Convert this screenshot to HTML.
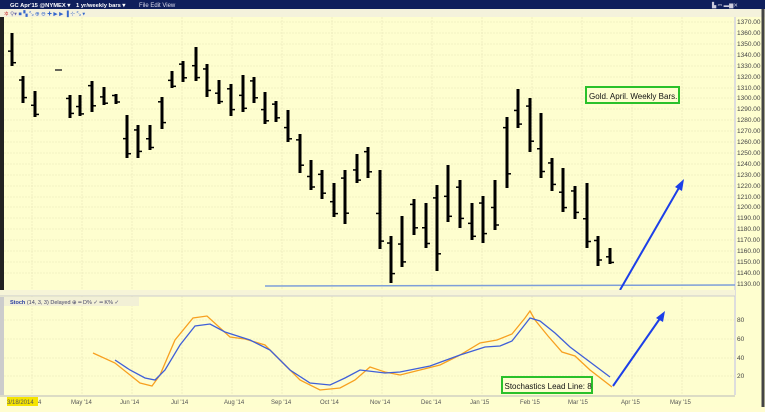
<!DOCTYPE html><html><head><style>
body{margin:0;width:765px;height:407px;overflow:hidden;background:#fffdd0;font-family:"Liberation Sans",sans-serif}
</style></head><body>
<svg id="s" width="765" height="407" xmlns="http://www.w3.org/2000/svg" font-family="Liberation Sans, sans-serif">
<rect x="0" y="0" width="765" height="407" fill="#fefecf"/>
<rect x="0" y="0" width="765" height="9" fill="#0f1f5c"/>
<text x="10" y="7" font-size="5.8" fill="#fff" font-weight="bold">GC Apr'15 @NYMEX ▾</text>
<text x="76" y="7" font-size="5.8" fill="#fff" font-weight="bold">1 yr/weekly bars ▾</text>
<text x="139" y="7" font-size="6" fill="#dde">File   Edit   View</text>
<text x="712" y="7" font-size="5.5" fill="#ccd">▙ ⎓ ▬▆✕</text>
<rect x="0" y="9" width="765" height="8" fill="#f4f2dc"/>
<text x="4" y="15.5" font-size="5.5" fill="#c33">✲ <tspan fill="#66a">⚲▾ </tspan><tspan fill="#36c">■ ▚ ⤡ ⊕ ⊖ ✚ ▶ ▶ ▐ ⊹ ⤡ ▾</tspan></text>
<rect x="0" y="17" width="4" height="273" fill="#222"/>
<rect x="0" y="297" width="4" height="98" fill="#ccc"/>
<line x1="735" y1="17" x2="735" y2="395" stroke="#ddd" stroke-width="2"/>
<line x1="763" y1="9" x2="763" y2="407" stroke="#444" stroke-width="3"/>
<g stroke="#e6e4b8" stroke-width="0.6" stroke-dasharray="2,1">
<line x1="4" y1="22" x2="735" y2="22"/><line x1="4" y1="33" x2="735" y2="33"/><line x1="4" y1="44" x2="735" y2="44"/><line x1="4" y1="55" x2="735" y2="55"/><line x1="4" y1="66" x2="735" y2="66"/><line x1="4" y1="77" x2="735" y2="77"/><line x1="4" y1="88" x2="735" y2="88"/><line x1="4" y1="98" x2="735" y2="98"/><line x1="4" y1="109" x2="735" y2="109"/><line x1="4" y1="120" x2="735" y2="120"/><line x1="4" y1="131" x2="735" y2="131"/><line x1="4" y1="142" x2="735" y2="142"/><line x1="4" y1="153" x2="735" y2="153"/><line x1="4" y1="164" x2="735" y2="164"/><line x1="4" y1="175" x2="735" y2="175"/><line x1="4" y1="186" x2="735" y2="186"/><line x1="4" y1="197" x2="735" y2="197"/><line x1="4" y1="207" x2="735" y2="207"/><line x1="4" y1="218" x2="735" y2="218"/><line x1="4" y1="229" x2="735" y2="229"/><line x1="4" y1="240" x2="735" y2="240"/><line x1="4" y1="251" x2="735" y2="251"/><line x1="4" y1="262" x2="735" y2="262"/><line x1="4" y1="273" x2="735" y2="273"/>
<line x1="4" y1="320" x2="735" y2="320"/><line x1="4" y1="339" x2="735" y2="339"/><line x1="4" y1="358" x2="735" y2="358"/><line x1="4" y1="376" x2="735" y2="376"/>
<line x1="32" y1="17" x2="32" y2="395"/><line x1="82" y1="17" x2="82" y2="395"/><line x1="132" y1="17" x2="132" y2="395"/><line x1="182" y1="17" x2="182" y2="395"/><line x1="232" y1="17" x2="232" y2="395"/><line x1="282" y1="17" x2="282" y2="395"/><line x1="332" y1="17" x2="332" y2="395"/><line x1="382" y1="17" x2="382" y2="395"/><line x1="432" y1="17" x2="432" y2="395"/><line x1="482" y1="17" x2="482" y2="395"/><line x1="532" y1="17" x2="532" y2="395"/><line x1="582" y1="17" x2="582" y2="395"/><line x1="632" y1="17" x2="632" y2="395"/><line x1="682" y1="17" x2="682" y2="395"/>
</g>
<g font-size="6.5" fill="#444">
<text x="737" y="24">1370.00</text><text x="737" y="35">1360.00</text><text x="737" y="46">1350.00</text><text x="737" y="57">1340.00</text><text x="737" y="68">1330.00</text><text x="737" y="79">1320.00</text><text x="737" y="90">1310.00</text><text x="737" y="100">1300.00</text><text x="737" y="111">1290.00</text><text x="737" y="122">1280.00</text><text x="737" y="133">1270.00</text><text x="737" y="144">1260.00</text><text x="737" y="155">1250.00</text><text x="737" y="166">1240.00</text><text x="737" y="177">1230.00</text><text x="737" y="188">1220.00</text><text x="737" y="199">1210.00</text><text x="737" y="209">1200.00</text><text x="737" y="220">1190.00</text><text x="737" y="231">1180.00</text><text x="737" y="242">1170.00</text><text x="737" y="253">1160.00</text><text x="737" y="264">1150.00</text><text x="737" y="275">1140.00</text><text x="737" y="286">1130.00</text>
<text x="737" y="322">80</text><text x="737" y="341">60</text><text x="737" y="360">40</text><text x="737" y="378">20</text>
</g>
<g id="bars" stroke="#000" stroke-width="3">
<line x1="12" y1="33" x2="12" y2="66"/><line x1="23" y1="76" x2="23" y2="103"/><line x1="35" y1="91" x2="35" y2="117"/>
<line x1="70" y1="95" x2="70" y2="118"/><line x1="80" y1="95" x2="80" y2="116"/><line x1="92" y1="81" x2="92" y2="112"/><line x1="104" y1="87" x2="104" y2="105"/><line x1="116" y1="94" x2="116" y2="104"/>
<line x1="127" y1="115" x2="127" y2="158"/><line x1="138" y1="125" x2="138" y2="158"/><line x1="150" y1="125" x2="150" y2="150"/><line x1="162" y1="97" x2="162" y2="129"/><line x1="172" y1="71" x2="172" y2="88"/><line x1="183" y1="61" x2="183" y2="82"/><line x1="196" y1="47" x2="196" y2="81"/><line x1="207" y1="64" x2="207" y2="97"/><line x1="219" y1="80" x2="219" y2="104"/><line x1="231" y1="84" x2="231" y2="116"/><line x1="243" y1="75" x2="243" y2="112"/><line x1="254" y1="77" x2="254" y2="103"/><line x1="265" y1="92" x2="265" y2="124"/><line x1="276" y1="101" x2="276" y2="122"/><line x1="288" y1="110" x2="288" y2="142"/>
<line x1="300" y1="134" x2="300" y2="173"/><line x1="311" y1="160" x2="311" y2="190"/><line x1="322" y1="170" x2="322" y2="199"/><line x1="334" y1="183" x2="334" y2="217"/><line x1="345" y1="170" x2="345" y2="224"/><line x1="357" y1="154" x2="357" y2="183"/><line x1="368" y1="147" x2="368" y2="178"/><line x1="380" y1="170" x2="380" y2="249"/><line x1="391" y1="236" x2="391" y2="283"/><line x1="402" y1="216" x2="402" y2="267"/><line x1="414" y1="199" x2="414" y2="235"/><line x1="426" y1="203" x2="426" y2="248"/><line x1="437" y1="185" x2="437" y2="271"/><line x1="448" y1="165" x2="448" y2="222"/><line x1="460" y1="180" x2="460" y2="228"/><line x1="472" y1="203" x2="472" y2="240"/><line x1="483" y1="196" x2="483" y2="243"/><line x1="495" y1="180" x2="495" y2="230"/><line x1="507" y1="117" x2="507" y2="188"/><line x1="518" y1="89" x2="518" y2="128"/><line x1="530" y1="98" x2="530" y2="152"/><line x1="541" y1="113" x2="541" y2="178"/><line x1="552" y1="158" x2="552" y2="191"/><line x1="563" y1="168" x2="563" y2="212"/><line x1="575" y1="186" x2="575" y2="219"/><line x1="587" y1="183" x2="587" y2="248"/><line x1="598" y1="236" x2="598" y2="266"/><line x1="610" y1="248" x2="610" y2="264"/>
</g>
<g id="ticks" stroke="#000" stroke-width="1.5"></g>
<line x1="55" y1="70" x2="62" y2="70" stroke="#333" stroke-width="1.5"/>
<line x1="265" y1="286" x2="735" y2="285" stroke="#7e9fd8" stroke-width="1.5"/>
<line x1="620" y1="290" x2="680" y2="186" stroke="#1c3fe8" stroke-width="2"/>
<polygon points="684,179 675,187 682,191" fill="#1c3fe8"/>
<rect x="586" y="87" width="93" height="16" fill="#fefecf" stroke="#2ac12a" stroke-width="2"/>
<text x="589" y="99" font-size="8" fill="#111">Gold. April. Weekly Bars.</text>
<rect x="0" y="290" width="735" height="6" fill="#f6f4d8"/>
<line x1="0" y1="296" x2="735" y2="296" stroke="#ccc"/>
<rect x="4" y="297" width="135" height="9" fill="#f2f0d6"/>
<text x="10" y="304" font-size="5.5" fill="#2a3ea0" font-weight="bold">Stoch <tspan font-weight="normal" fill="#446">  (14, 3, 3) Delayed ⊕   ━ D% ✓   ━ K% ✓</tspan></text>
<polyline fill="none" stroke="#f7a020" stroke-width="1.3" points="93,353 115,363 130,375 140,383 152,386 160,375 175,340 193,318 207,316 230,337 245,339 265,345 280,360 300,380 320,390 340,388 355,380 370,367 385,372 400,375 420,370 440,365 460,355 480,343 497,340 512,334 525,318 530,311 535,320 548,336 562,352 575,356 590,370 612,387"/>
<polyline fill="none" stroke="#3f5fd8" stroke-width="1.3" points="115,360 130,370 145,378 155,380 165,370 180,345 195,326 210,324 225,332 250,340 270,350 290,370 310,383 330,385 345,378 360,370 385,373 400,372 430,366 460,355 485,347 500,346 512,341 523,327 530,318 540,321 555,333 570,347 590,362 610,377"/>
<line x1="613" y1="386" x2="661" y2="317" stroke="#1c3fe8" stroke-width="2"/>
<polygon points="665,311 656,318 663,322" fill="#1c3fe8"/>
<rect x="502" y="377" width="90" height="16" fill="#fefecf" stroke="#2ac12a" stroke-width="2"/>
<text x="504.5" y="389" font-size="8" fill="#111">Stochastics Lead Line: 8</text>
<line x1="0" y1="396" x2="735" y2="396" stroke="#bbb"/>
<rect x="7" y="397" width="31" height="9" fill="#f5e400"/>
<g font-size="6" fill="#555">
<text x="7" y="404">3/18/2014</text><text x="38" y="404">4</text>
<text x="71" y="404">May '14</text><text x="120" y="404">Jun '14</text><text x="171" y="404">Jul '14</text><text x="224" y="404">Aug '14</text><text x="271" y="404">Sep '14</text><text x="320" y="404">Oct '14</text><text x="370" y="404">Nov '14</text><text x="421" y="404">Dec '14</text><text x="470" y="404">Jan '15</text><text x="520" y="404">Feb '15</text><text x="568" y="404">Mar '15</text><text x="621" y="404">Apr '15</text><text x="670" y="404">May '15</text>
</g>
</svg>
<script>
var ls=document.querySelectorAll('#bars line'),g=document.getElementById('ticks'),ns='http://www.w3.org/2000/svg';
ls.forEach(function(l,i){var x=+l.getAttribute('x1'),a=+l.getAttribute('y1'),b=+l.getAttribute('y2');
var o=(i%2)?a+(b-a)*0.15:a+(b-a)*0.55,c=(i%2)?a+(b-a)*0.8:a+(b-a)*0.9;
[[x-4,x,o],[x,x+4,c]].forEach(function(t){var e=document.createElementNS(ns,'line');e.setAttribute('x1',t[0]);e.setAttribute('x2',t[1]);e.setAttribute('y1',t[2]);e.setAttribute('y2',t[2]);g.appendChild(e);});});
</script>
</body></html>
